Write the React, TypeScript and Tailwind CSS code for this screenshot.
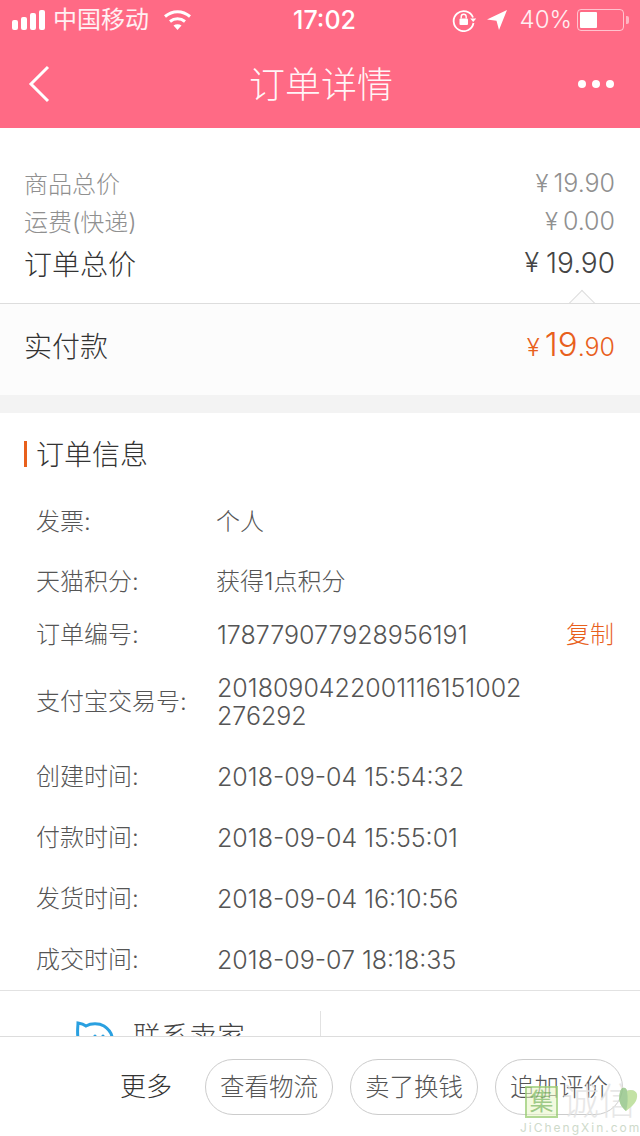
const infoRows = [
  { label: '发票:', value: ['个人'], height: 'h-[60px]' },
  { label: '天猫积分:', value: ['获得1点积分'], height: 'h-[60px]' },
  { label: '订单编号:', value: ['178779077928956191'], height: 'h-[46px]', copy: true },
  { label: '支付宝交易号:', value: ['2018090422001116151002', '276292'], height: 'h-[88px]' },
  { label: '创建时间:', value: ['2018-09-04 15:54:32'], height: 'h-[61px]' },
  { label: '付款时间:', value: ['2018-09-04 15:55:01'], height: 'h-[61px]' },
  { label: '发货时间:', value: ['2018-09-04 16:10:56'], height: 'h-[61px]' },
  { label: '成交时间:', value: ['2018-09-07 18:18:35'], height: 'h-[61px]' },
]

const buttons = ['查看物流', '卖了换钱', '追加评价']

function StatusBar() {
  return (
    <div className="flex h-10 items-center pl-3 text-white">
      <div className="flex w-[281px] items-center">
        <div className="flex items-end gap-[3px]">
          <div className="h-[10px] w-[6px] rounded-[2px] bg-white" />
          <div className="h-[13px] w-[6px] rounded-[2px] bg-white" />
          <div className="h-[17px] w-[6px] rounded-[2px] bg-white" />
          <div className="h-[20px] w-[6px] rounded-[2px] bg-white" />
        </div>
        <span className="ml-[8px] text-[24px] leading-none text-white/90">中国移动</span>
        <svg className="ml-[14px]" width="29" height="22" viewBox="0 0 29 22" fill="none" stroke="white" strokeWidth="3">
          <path d="M2 7.5C9.5 1 19.5 1 27 7.5" />
          <path d="M7 12.5C11.5 8.7 17.5 8.7 22 12.5" />
          <path d="M14.5 21 10.5 16.5C12.8 14.8 16.2 14.8 18.5 16.5Z" fill="white" stroke="none" />
        </svg>
      </div>
      <span className="text-[25px] font-medium leading-none">17:02</span>
      <div className="ml-auto flex items-center pr-[11px]">
        <svg width="24" height="24" viewBox="0 0 24 24" fill="none" stroke="white" strokeWidth="1.8">
          <path d="M21 9.5A10 10 0 1 0 21.5 15" />
          <path d="M18.2 10.5h6l-3 3.6Z" fill="white" stroke="none" />
          <rect x="7.5" y="10.5" width="8.5" height="6.5" rx="1" fill="white" stroke="none" />
          <path d="M9.2 10.5V8.7a2.5 2.5 0 0 1 5 0v1.8" strokeWidth="1.4" />
        </svg>
        <svg className="ml-[10px]" width="22" height="22" viewBox="0 0 22 22" fill="white">
          <path d="M21 1 1 10.5l9.5 1.2L13 21Z" />
        </svg>
        <span className="ml-[12px] text-[24px] font-light leading-none text-white/90">40%</span>
        <div className="ml-[5px] flex h-[22px] w-[47px] items-center rounded-[4px] border border-white/60 p-[2px]">
          <div className="h-full w-[17px] rounded-[1px] bg-white" />
        </div>
        <div className="ml-[2px] h-2 w-[3px] rounded-r-[2px] bg-white/50" />
      </div>
    </div>
  )
}

function NavBar() {
  return (
    <div className="grid h-[88px] grid-cols-3 items-center pl-[28px] pr-[26px]">
      <svg width="22" height="38" viewBox="0 0 22 38" fill="none" stroke="white" strokeWidth="3">
        <path d="M20 2 3 19l17 17" />
      </svg>
      <h1 className="whitespace-nowrap pt-[2px] text-center text-[36px] font-light leading-none text-white/95">订单详情</h1>
      <div className="flex justify-end gap-[6px]">
        <div className="h-[8px] w-[8px] rounded-full bg-white" />
        <div className="h-[8px] w-[8px] rounded-full bg-white" />
        <div className="h-[8px] w-[8px] rounded-full bg-white" />
      </div>
    </div>
  )
}

function PriceSummary() {
  return (
    <div className="relative">
      <div className="h-[175px] pl-[24px] pr-[25px] pt-[37px]">
        <div className="flex h-[38px] items-center justify-between text-[#909090]">
          <span className="pt-[2px] text-[24px] font-light">商品总价</span>
          <span className="flex items-center gap-[5px] text-[25px] font-light"><span className="text-[24px]">¥</span>19.90</span>
        </div>
        <div className="flex h-[38px] items-center justify-between text-[#909090]">
          <span className="pt-[2px] text-[24px] font-light">运费(快递)</span>
          <span className="flex items-center gap-[5px] text-[25px] font-light"><span className="text-[24px]">¥</span>0.00</span>
        </div>
        <div className="flex h-[44px] items-center justify-between text-[#333333]">
          <span className="pt-[3px] text-[28px] font-light">订单总价</span>
          <span className="flex items-center gap-[7px] text-[28px] font-light text-[#444444]"><span className="text-[27px]">¥</span>19.90</span>
        </div>
      </div>
      <div className="absolute left-[572px] top-[166px] h-[20px] w-[20px] rotate-45 border-l border-t border-[#dddddd] bg-[#fcfcfc]" />
      <div className="relative flex h-[92px] items-center justify-between border-t border-[#dddddd] bg-[#fcfcfc] pb-[6px] pl-[24px] pr-[25px]">
        <span className="text-[28px] font-light text-[#333333]">实付款</span>
        <span className="flex items-baseline font-light text-[#e8601c]">
          <span className="mr-[5px] text-[24px]">¥</span>
          <span className="text-[33px] leading-none">19</span>
          <span className="text-[25px] leading-none">.90</span>
        </span>
      </div>
      <div className="h-[18px] bg-[#f3f3f3]" />
    </div>
  )
}

function OrderInfo() {
  return (
    <div className="border-b border-[#e2e2e2]">
      <div className="flex h-[79px] items-start pl-[24px] pt-[28px]">
        <div className="h-[26px] w-[3px] bg-[#e8601c]" />
        <h2 className="ml-[9px] text-[28px] font-light leading-[28px] text-[#333333]">订单信息</h2>
      </div>
      {infoRows.map((row) => (
        <div key={row.label} className={`flex items-center pl-[36px] pr-[26px] ${row.height}`}>
          <span className="w-[181px] text-[24px] font-light text-[#555555]">{row.label}</span>
          <div className="flex-1 text-[25px] font-light leading-[28px] text-[#555555]">
            {row.value.map((line) => (
              <div key={line} className={line === '个人' || line.startsWith('获得') ? '-ml-[1px] text-[24px]' : ''}>{line}</div>
            ))}
          </div>
          {row.copy && <span className="text-[24px] font-light text-[#e8601c]">复制</span>}
        </div>
      ))}
    </div>
  )
}

function ContactRow() {
  return (
    <div className="flex h-[90px] pt-[20px]">
      <div className="flex h-[70px] w-[321px] items-start border-r border-[#e2e2e2] pl-[76px]">
        <svg className="mt-[10px]" width="38" height="36" viewBox="0 0 38 36" fill="none" stroke="#2aa0e0" strokeWidth="3">
          <path d="M2 17C1 10 2 5 2 2c3 .5 6 1.5 8 3 5-3 13-3 18 0 6 4 9 10 8 16-1 8-8 13-17 13S2 28 2 17Z" />
          <circle cx="19" cy="15" r="1.6" fill="#2aa0e0" stroke="none" />
          <circle cx="27" cy="15" r="1.6" fill="#2aa0e0" stroke="none" />
        </svg>
        <span className="ml-[19px] mt-[12px] text-[28px] font-light leading-none text-[#444444]">联系卖家</span>
      </div>
    </div>
  )
}

function BottomBar() {
  return (
    <div className="flex h-[100px] shrink-0 items-start border-t border-[#dddddd] bg-white pl-[120px] pt-[22px]">
      <div className="flex items-center">
        <span className="mr-[33px] text-[26px] font-light leading-none text-[#333333]">更多</span>
        <div className="flex gap-[17px]">
          {buttons.map((text) => (
            <div key={text} className="flex h-[56px] w-[128px] items-center justify-center rounded-full border border-[#cccccc] text-[24.5px] font-light text-[#555555]">
              {text}
            </div>
          ))}
        </div>
      </div>
    </div>
  )
}

function Watermark() {
  return (
    <div className="absolute bottom-0 left-[520px] h-[50px] w-[120px] opacity-80">
      <div className="flex items-start pl-[5px]">
        <div className="flex h-[32px] w-[33px] items-center justify-center border-2 border-[#9fd07a] bg-[#e9f6c8]/70 text-[24px] leading-none text-[#86bd6a]">集</div>
        <span className="ml-[4px] text-[37px] font-light leading-[32px] text-[#e2e2e2]">诚信</span>
      </div>
      <svg className="absolute left-[98px] top-0" width="20" height="26" viewBox="0 0 20 26" fill="#b5dc8f">
        <path d="M8 25C2 20 0 14 2 6 3 1 8 0 9 5c3-2 9-1 10 3 1 7-4 12-11 17Z" />
        <path d="M8 25C2 20 0 14 2 6 3 1 8 0 9 5c1 6 1 14-1 20Z" fill="#8fc383" />
      </svg>
      <div className="mt-[3px] whitespace-nowrap text-[12px] leading-[14px] tracking-[2px] text-[#c3d2be]">JiChengXin.com</div>
    </div>
  )
}

export default function App() {
  return (
    <div className="relative flex h-[1136px] w-[640px] flex-col overflow-hidden bg-white font-['Inter','Noto_Sans_CJK_SC',sans-serif]">
      <div className="h-[128px] shrink-0 bg-[#ff6a85]">
        <StatusBar />
        <NavBar />
      </div>
      <div className="min-h-0 flex-1 overflow-hidden">
        <PriceSummary />
        <OrderInfo />
        <ContactRow />
      </div>
      <BottomBar />
      <Watermark />
    </div>
  )
}
